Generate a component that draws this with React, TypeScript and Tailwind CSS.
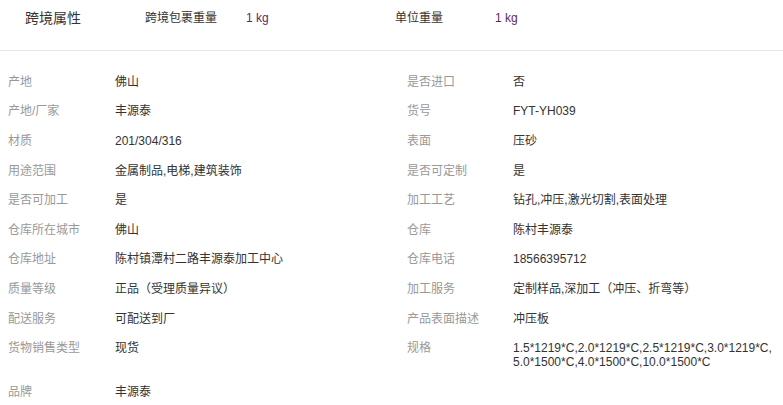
const font = { fontFamily: '"Liberation Sans", "Noto Sans CJK SC", sans-serif' };

type Attr = { label: string; value: React.ReactNode };

const rows: [Attr, Attr | null][] = [
  [{ label: '产地', value: '佛山' }, { label: '是否进口', value: '否' }],
  [{ label: '产地/厂家', value: '丰源泰' }, { label: '货号', value: 'FYT-YH039' }],
  [{ label: '材质', value: '201/304/316' }, { label: '表面', value: '压砂' }],
  [{ label: '用途范围', value: '金属制品,电梯,建筑装饰' }, { label: '是否可定制', value: '是' }],
  [{ label: '是否可加工', value: '是' }, { label: '加工工艺', value: '钻孔,冲压,激光切割,表面处理' }],
  [{ label: '仓库所在城市', value: '佛山' }, { label: '仓库', value: '陈村丰源泰' }],
  [{ label: '仓库地址', value: '陈村镇潭村二路丰源泰加工中心' }, { label: '仓库电话', value: '18566395712' }],
  [{ label: '质量等级', value: '正品（受理质量异议）' }, { label: '加工服务', value: '定制样品,深加工（冲压、折弯等）' }],
  [{ label: '配送服务', value: '可配送到厂' }, { label: '产品表面描述', value: '冲压板' }],
  [
    { label: '货物销售类型', value: '现货' },
    {
      label: '规格',
      value: (
        <>
          1.5*1219*C,2.0*1219*C,2.5*1219*C,3.0*1219*C,
          <br />
          5.0*1500*C,4.0*1500*C,10.0*1500*C
        </>
      ),
    },
  ],
  [{ label: '品牌', value: '丰源泰' }, null],
];

function Cell({ attr, labelWidth }: { attr: Attr | null; labelWidth: string }) {
  if (!attr) return null;
  return (
    <div className="flex">
      <div className={`${labelWidth} shrink-0 text-[#999]`}>{attr.label}</div>
      <div className="text-[#333]">{attr.value}</div>
    </div>
  );
}

export default function App() {
  return (
    <div className="w-[783px] h-[405px] bg-white overflow-hidden text-[12px]" style={font}>
      {/* Cross-border attributes */}
      <div className="h-[51px] border-b border-[#e5e5e5] flex items-start pt-[8px] pl-[25px] leading-[20px]">
        <div className="w-[120px] text-[14px] text-[#333]">跨境属性</div>
        <div className="w-[250px] flex">
          <div className="w-[101px] text-[#333]">跨境包裹重量</div>
          <div className="text-[#5c2a5c]">1 kg</div>
        </div>
        <div className="flex">
          <div className="w-[100px] text-[#333]">单位重量</div>
          <div className="text-[#5c2a5c]">1 kg</div>
        </div>
      </div>

      {/* Product attributes */}
      <div className="pt-[16px] pl-[8px] leading-[14px]">
        {rows.map(([left, right], i) => (
          <div key={i} className="flex py-[7.8px]">
            <div className="w-[399px] shrink-0">
              <Cell attr={left} labelWidth="w-[107px]" />
            </div>
            <div className="flex-1">
              <Cell attr={right} labelWidth="w-[106px]" />
            </div>
          </div>
        ))}
      </div>
    </div>
  );
}
